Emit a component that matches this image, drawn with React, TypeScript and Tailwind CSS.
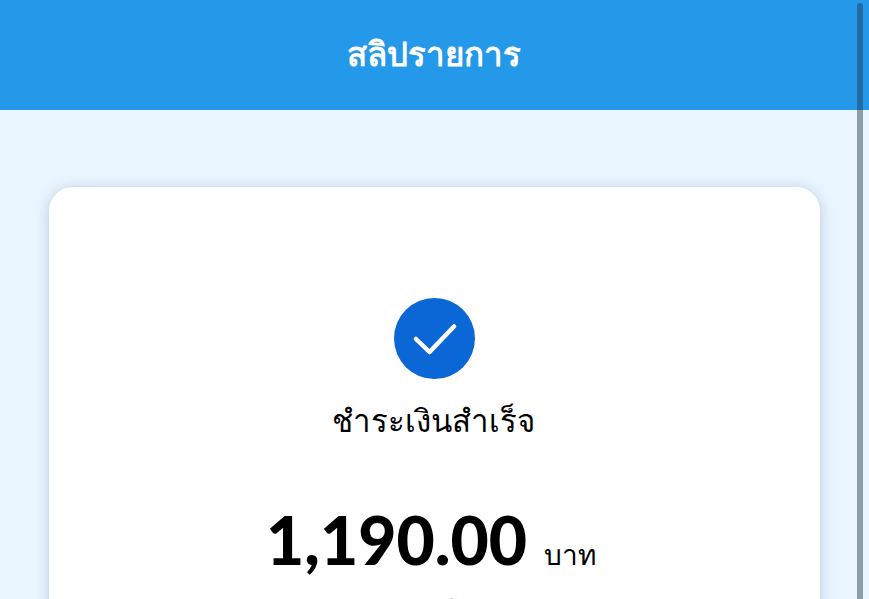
export default function App() {
  return (
    <div className="relative h-[599px] w-[869px] overflow-hidden bg-[#e9f5ff] font-['Inter','Noto_Sans',sans-serif]">
      {/* Header */}
      <header className="flex h-[110px] items-center justify-center bg-[#2499ea]">
        <h1 className="pr-[2px] text-[33px] font-semibold text-white">สลิปรายการ</h1>
      </header>

      {/* Slip card */}
      <main className="pt-[77px] pr-[49px] pl-[49px]">
        <div className="flex h-[600px] flex-col items-center rounded-t-[24px] bg-white pt-[111px] shadow-[0_2px_14px_rgba(70,95,125,0.28)]">
          <div className="flex h-[81px] w-[81px] items-center justify-center rounded-full bg-[#0b67d6]">
            <svg width="44" height="32" viewBox="0 0 44 32" fill="none">
              <path d="M3 16L16.5 29L41 3.5" stroke="white" strokeWidth="4.5" strokeLinecap="round" strokeLinejoin="round" />
            </svg>
          </div>
          <p className="mt-[19px] pr-[2px] text-[31.2px] leading-[46px] text-black">ชำระเงินสำเร็จ</p>
          <div className="mt-[56px] flex items-baseline gap-[17px] pr-[7px] text-black">
            <span className="font-['Lato',sans-serif] text-[66px] leading-[80px] font-black">1,190.00</span>
            <span className="text-[28px]">บาท</span>
          </div>
          <p className="mt-[12px] text-[24px] leading-[36px] text-[#333333]">ยอดเงิน</p>
        </div>
      </main>

      {/* Scrollbar */}
      <div className="absolute top-[3px] right-[6px] bottom-0 w-[6px] rounded-t-full bg-[rgba(30,50,70,0.45)]" />
    </div>
  );
}
